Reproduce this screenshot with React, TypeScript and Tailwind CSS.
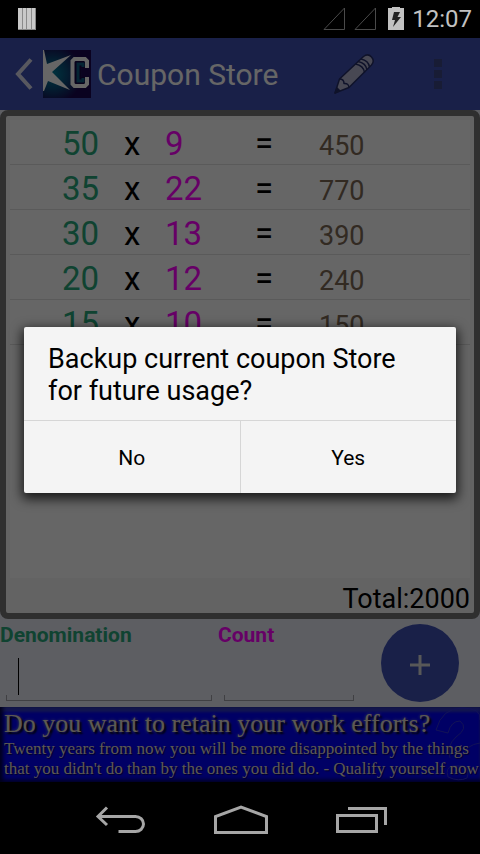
import React from "react";

const rows = [
  { denomination: 50, count: 9 },
  { denomination: 35, count: 22 },
  { denomination: 30, count: 13 },
  { denomination: 20, count: 12 },
  { denomination: 15, count: 10 },
];

function StatusBar() {
  return (
    <div className="flex h-[38px] shrink-0 items-center bg-black pr-2 pl-[18px] text-[#c2c2c2]">
      <svg width="18" height="22" viewBox="0 0 18 22" aria-hidden="true">
        <rect width="18" height="22" fill="#8a8a8a" />
        <path d="M0 0h4v21H0zM5 0h3v21H5zM9 0h4v21H9zM14 0h3v21h-3z" fill="#c9c9c9" />
      </svg>
      <div className="ml-auto flex items-center">
        <svg className="mr-2" width="23" height="25" viewBox="0 0 23 25" fill="none" stroke="#4a4a4a" aria-hidden="true">
          <path d="M1 22.500 21.500 1v21.500z" />
        </svg>
        <svg className="mr-[11px]" width="23" height="25" viewBox="0 0 23 25" fill="none" stroke="#4a4a4a" aria-hidden="true">
          <path d="M1 22.500 21.500 1v21.500z" />
        </svg>
        <svg className="mr-2" width="16" height="24" viewBox="0 0 16 24" aria-hidden="true">
          <path d="M0 1h4V0h8v1h4v22H0z" fill="#c2c2c2" />
          <path d="M6 5h6L9.500 10H13L5 20l2-7H4z" fill="#222" />
        </svg>
        <span className="text-2xl leading-[38px]">12:07</span>
      </div>
    </div>
  );
}

function AppLogo() {
  return (
    <svg width="48" height="48" viewBox="0 0 48 48" aria-hidden="true">
      <defs>
        <radialGradient id="logoGlow" cx="0.2" cy="0.5" r="0.62">
          <stop offset="0" stopColor="#00809c" />
          <stop offset="0.5" stopColor="#0a4a78" />
          <stop offset="1" stopColor="#1a0650" />
        </radialGradient>
      </defs>
      <rect width="48" height="48" fill="url(#logoGlow)" />
      <path d="M0 0h1L4 14 28 5 9 22 27 40 5 31 1 41H0z" fill="#fff" />
      <path d="M31 11h11v7h-4v9h4v7H31z" fill="#140544" />
      <path
        d="M44 18v-7l-2-2H31.500l-2 2v23l2 2H42l2-2v-7"
        fill="none" stroke="#fff" strokeWidth="4"
      />
      <path d="M40 17v-3h-5v17h5v-3" fill="none" stroke="#0a5a80" strokeWidth="3" />
    </svg>
  );
}

function Header() {
  return (
    <header className="flex h-[72px] shrink-0 items-center bg-[#3f51b5] pr-[37px] pl-[15px]">
      <button type="button" aria-label="Back" className="flex w-7 items-center">
        <svg width="18" height="32" viewBox="0 0 18 32" fill="none" stroke="#dcdcee" strokeWidth="4" aria-hidden="true">
          <path d="M16 1.500 3 16l13 14.500" />
        </svg>
      </button>
      <AppLogo />
      <h1 className="ml-1.5 pt-0.5 text-[30px] leading-9 text-white">Coupon Store</h1>
      <button type="button" aria-label="Edit" className="ml-auto">
        <svg width="42" height="42" viewBox="0 0 42 42" stroke="#262e68" strokeWidth="1.500" strokeLinejoin="round" aria-hidden="true">
          <path d="M2 40 6.500 26 30.500 3.500Q35 0 38.500 4 42 8 38.500 12L16 34.500z" fill="#b4b4d0" />
          <path d="M6.500 26Q11 26 11 30.500 15.500 30 16 34.500M22.500 11Q30.500 12.500 31.500 19.500M25 8.500Q33 10 34 17M28 6Q35.500 7.500 36.500 14" fill="none" />
          <path d="M2 40l2-5 2.500 2.500z" fill="#262e68" />
        </svg>
      </button>
      <button type="button" aria-label="More options" className="ml-[59px]">
        <svg width="9" height="30" viewBox="0 0 9 30" fill="#3e4684" aria-hidden="true">
          <path d="M0 0h8v8H0zM0 11h8v8H0zM0 22h8v8H0z" />
        </svg>
      </button>
    </header>
  );
}

function CouponPanel() {
  const total = rows.reduce((sum, r) => sum + r.denomination * r.count, 0);
  return (
    <section className="flex grow flex-col rounded-lg border-6 border-[#757575] bg-[#f8f8f8] px-1 pt-1">
      <div className="grow bg-white">
        <table className="w-full table-fixed border-collapse text-left text-[33px] leading-10">
          <colgroup>
            <col className="w-[114px]" />
            <col className="w-[41px]" />
            <col className="w-[90px]" />
            <col className="w-[64px]" />
            <col />
          </colgroup>
          <tbody>
            {rows.map((r) => (
              <tr key={r.denomination} className="border-b border-[#e2e2e2] align-baseline">
                <td className="p-0 pt-1 pl-[52px] text-[#28a87c]">{r.denomination}</td>
                <td className="p-0 pt-1 text-black">x</td>
                <td className="p-0 pt-1 text-[#ff00ff]">{r.count}</td>
                <td className="p-0 pt-1 text-black">=</td>
                <td className="p-0 pt-1 text-[27px] leading-8 text-[#7d6955]">{r.denomination * r.count}</td>
              </tr>
            ))}
          </tbody>
        </table>
      </div>
      <p className="pt-2 text-right text-[27px] leading-[27px] text-black">Total:{total}</p>
    </section>
  );
}

function EntryForm() {
  const box = "mt-auto mb-1.5 ml-1.5 flex flex-col";
  const field = "w-full bg-transparent px-3 text-[27px] leading-9 text-black outline-none";
  const line = "h-1.5 border-x border-b border-[#a0a0a8]";
  return (
    <form className="flex h-[88px] shrink-0 bg-[#e8eaf6] pr-[21px]" onSubmit={(e) => e.preventDefault()}>
      <div className="flex w-[218px] flex-col">
        <label htmlFor="denomination" className="pt-1 text-[21px] leading-6 font-bold text-[#28a87c]">Denomination</label>
        <div className={box + " mr-1.5"}>
          <div className="ml-3 w-px bg-black">
            <input id="denomination" type="text" className="block h-[37px] w-[180px] bg-transparent px-1 text-[27px] text-black outline-none" />
          </div>
          <div className={line} />
        </div>
      </div>
      <div className="flex w-[136px] flex-col">
        <label htmlFor="count" className="pt-1 text-[21px] leading-6 font-bold text-[#ff00ff]">Count</label>
        <div className={box}>
          <input id="count" type="text" className={field} />
          <div className={line} />
        </div>
      </div>
      <button type="submit" aria-label="Add" className="mt-[5px] ml-auto flex size-[78px] items-center justify-center rounded-full bg-[#3f51b5]">
        <svg className="mt-1" width="20" height="20" viewBox="0 0 20 20" stroke="#dcdcdc" strokeWidth="3" aria-hidden="true">
          <path d="M0 10h20M10 0v20" />
        </svg>
      </button>
    </form>
  );
}

function Banner() {
  return (
    <aside className="relative h-[75px] shrink-0 overflow-hidden bg-[#0000fc] px-1 font-['Liberation_Serif',serif] whitespace-nowrap text-[#e6dfd0] shadow-[inset_3px_-2px_4px_#000040,inset_0_5px_3px_#3038c0]">
      <svg className="absolute top-0 right-0" width="46" height="75" viewBox="0 0 46 75" fill="none" stroke="#3030d8" aria-hidden="true">
        <path d="M2 23Q8 1 28 1t18 12M2 23l12 3Q17 14 26 14q9 7-4 16-10 9-6 21M30 48q2-10 16-12M14 70q-3-10 5-11h10q7 4 4 12-8 4-19-1z" />
      </svg>
      <p className="relative pt-0.5 text-[26px] leading-[30px] [text-shadow:2px_2px_2px_#000,0_0_3px_#a0a0c0]">Do you want to retain your work efforts?</p>
      <p className="relative text-[17px] leading-5 [text-shadow:1px_1px_1px_#000060]">
        Twenty years from now you will be more disappointed by the things
        <br />
        that you didn't do than by the ones you did do. - Qualify yourself now
      </p>
    </aside>
  );
}

function BackupDialog() {
  return (
    <div className="absolute inset-0 flex items-center justify-center bg-black/60 px-6">
      <div role="dialog" aria-label="Backup" className="w-full rounded-xs bg-[#f4f4f4] shadow-[0_4px_12px_2px_rgba(0,0,0,0.75)]">
        <p className="px-6 pt-4 pb-[13px] text-[27px] leading-8 text-black">Backup current coupon Store for future usage?</p>
        <div className="flex h-[73px] border-t border-[#d6d6d6] text-[21px] text-black">
          <button type="button" className="flex-1 border-r border-[#d6d6d6] pt-1">No</button>
          <button type="button" className="flex-1 pt-1">Yes</button>
        </div>
      </div>
    </div>
  );
}

function NavBar() {
  return (
    <nav className="flex h-[72px] shrink-0 items-center justify-between bg-black pt-1 pr-[93px] pl-[95px]">
      <button type="button" aria-label="Back">
        <svg width="52" height="28" viewBox="0 0 52 28" fill="none" stroke="#a6a6a6" strokeWidth="3" aria-hidden="true">
          <path d="M3 10.500H40.500a8 7.500 0 0 1 0 15H23.500M12 1.500 3 10.500l9 8.500" />
        </svg>
      </button>
      <button type="button" aria-label="Home">
        <svg width="56" height="30" viewBox="0 0 56 30" fill="none" stroke="#a6a6a6" strokeWidth="3" aria-hidden="true">
          <path d="M2.500 27.500V11.500L28 2l25.500 9.500v16z" />
        </svg>
      </button>
      <button type="button" aria-label="Recent apps">
        <svg width="52" height="28" viewBox="0 0 52 28" fill="none" stroke="#a6a6a6" strokeWidth="3" aria-hidden="true">
          <path d="M2.500 9.500h39v16h-39zM13 2.500h37.500V19" />
        </svg>
      </button>
    </nav>
  );
}

export default function App() {
  return (
    <div className="flex min-h-screen flex-col bg-black font-[Roboto,sans-serif]">
      <StatusBar />
      <main className="relative flex grow flex-col bg-[#e8eaf6]">
        <Header />
        <CouponPanel />
        <EntryForm />
        <Banner />
        <BackupDialog />
      </main>
      <NavBar />
    </div>
  );
}
